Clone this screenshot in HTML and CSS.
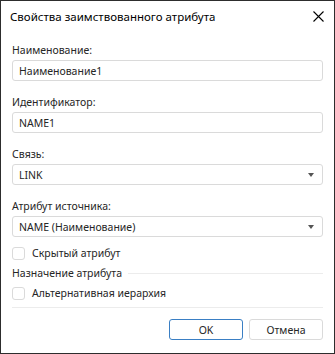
FILE: index.html
```html
<!DOCTYPE html>
<html lang="ru">
<head>
  <meta charset="UTF-8">
  <title>Свойства заимствованного атрибута</title>
  <link rel="stylesheet" href="styles.css">
</head>
<body>
  <div class="dialog">
    <div class="titlebar">
      <span class="title">Свойства заимствованного атрибута</span>
      <button class="close" aria-label="Закрыть">
        <svg width="11" height="11" viewBox="0 0 11 11"><path d="M0.5 0.5L10.5 10.5M10.5 0.5L0.5 10.5" stroke="#000" stroke-width="1.1" fill="none"/></svg>
      </button>
    </div>

    <div class="content">
      <div class="field">
        <label for="name">Наименование:</label>
        <input type="text" id="name" value="Наименование1">
      </div>

      <div class="field">
        <label for="ident">Идентификатор:</label>
        <input type="text" id="ident" value="NAME1">
      </div>

      <div class="field">
        <label>Связь:</label>
        <div class="combo">
          <span>LINK</span>
          <span class="arrow"></span>
        </div>
      </div>

      <div class="field">
        <label>Атрибут источника:</label>
        <div class="combo">
          <span>NAME (Наименование)</span>
          <span class="arrow"></span>
        </div>
      </div>

      <div class="check first">
        <span class="box"></span>
        <span>Скрытый атрибут</span>
      </div>

      <div class="group">
        <span>Назначение атрибута</span>
        <span class="rule"></span>
      </div>

      <div class="check">
        <span class="box"></span>
        <span>Альтернативная иерархия</span>
      </div>

      <div class="separator"></div>

      <div class="buttons">
        <button class="btn default">OK</button>
        <button class="btn">Отмена</button>
      </div>
    </div>
  </div>
</body>
</html>
```

FILE: styles.css
```css
:root {
  --text: #262626;
  --border: #dadada;
  --accent: #3a7fc4;
  --radius: 3px;
}
* {
  box-sizing: border-box;
  margin: 0;
  padding: 0;
}
body {
  font-family: 'Noto Sans', 'Open Sans', sans-serif;
  font-size: 10.5px;
  color: var(--text);
  background: #ffffff;
}
.dialog {
  width: 335px;
  height: 354px;
  border: 1px solid #2d2d2d;
  background: #ffffff;
  display: flex;
  flex-direction: column;
}
.titlebar {
  height: 30px;
  display: flex;
  align-items: center;
  justify-content: space-between;
  padding: 0 10px 0 9px;
}
.title {
  font-size: 11.5px;
  color: #000000;
}
.close {
  border: none;
  background: none;
  width: 11px;
  height: 11px;
  display: flex;
}
.content {
  padding: 0 11px;
  display: flex;
  flex-direction: column;
}
.field {
  display: flex;
  flex-direction: column;
  margin-top: 11px;
}
.field + .field {
  margin-top: 13px;
}
label {
  line-height: 16px;
  margin-bottom: 2px;
}
input[type=text], .combo {
  height: 21px;
  width: 100%;
  border: 1px solid var(--border);
  border-radius: var(--radius);
  padding: 0 6px;
  font: inherit;
  color: var(--text);
  background: #ffffff;
}
.combo {
  display: flex;
  align-items: center;
  justify-content: space-between;
  padding-right: 8px;
}
.arrow {
  width: 0;
  height: 0;
  border-left: 3.5px solid transparent;
  border-right: 3.5px solid transparent;
  border-top: 4px solid #555555;
}
.check {
  height: 20px;
  display: flex;
  align-items: center;
  gap: 7px;
}
.check.first {
  margin-top: 6px;
}
.box {
  width: 13px;
  height: 13px;
  border: 1px solid var(--border);
  border-radius: var(--radius);
}
.group {
  height: 20px;
  display: flex;
  align-items: center;
  gap: 6px;
}
.rule {
  flex: 1;
  height: 1px;
  background: #ececec;
}
.separator {
  height: 1px;
  background: #ececec;
  margin-top: 4px;
}
.buttons {
  display: flex;
  justify-content: flex-end;
  gap: 6px;
  margin-top: 11px;
}
.btn {
  width: 74px;
  height: 21px;
  border: 1px solid var(--border);
  border-radius: var(--radius);
  background: #ffffff;
  font: inherit;
  color: var(--text);
}
.btn.default {
  border-color: var(--accent);
}
```
